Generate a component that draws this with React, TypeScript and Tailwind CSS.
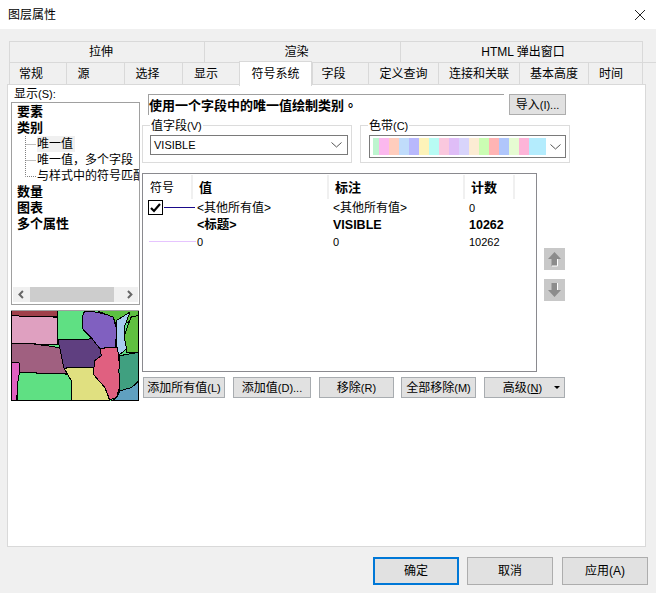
import React from "react";

const ui = "font-['Liberation_Sans','Noto_Sans_CJK_SC',sans-serif]";

const ramp = [
  "w-[6px] bg-[#bdf5cf]", "w-[10px] bg-[#fbb8ee]", "w-[10px] bg-[#ffcdbd]", "w-[10px] bg-[#c0dcfb]",
  "w-[10px] bg-[#b8b8fc]", "w-[10px] bg-[#fdf3b9]", "w-[10px] bg-[#b8fbf4]", "w-[10px] bg-[#fac8de]",
  "w-[10px] bg-[#dfbdf7]", "w-[10px] bg-[#d8d4fb]", "w-[10px] bg-[#fcecd3]", "w-[10px] bg-[#cbfdb3]",
  "w-[10px] bg-[#ffb4b4]", "w-[10px] bg-[#b0c6fb]", "w-[10px] bg-[#e6fbd2]", "w-[10px] bg-[#fdb4d8]",
  "w-[17px] bg-[#b4ecfd]",
];

const row1 = [
  ["拉伸", "w-[195px] pr-[12px]"],
  ["渲染", "w-[196px] pr-[12px]"],
  ["HTML 弹出窗口", "w-[243px] pl-[3px]"],
];
const row2 = [
  ["常规", "w-[57px] pr-[14px]"], ["源", "w-[58px] pr-[24px]"], ["选择", "w-[58px] pr-[12px]"], ["显示", "w-[57px] pr-[10px]"],
  ["符号系统", "w-[73px]"], ["字段", "w-[56px] pr-[14px]"], ["定义查询", "w-[70px]"], ["连接和关联", "w-[81px]"],
  ["基本高度", "w-[69px]"], ["时间", "w-[55px] pr-[9px]"],
];

function L({ children }: { children: React.ReactNode }) {
  return <span className="text-[11px]">{children}</span>;
}

function Chevron() {
  return (
    <svg width="11" height="6" viewBox="0 0 11 6" fill="none" stroke="#555" strokeWidth="1">
      <path d="M0.5 0.5 L5.5 5 L10.5 0.5" />
    </svg>
  );
}

function Connector({ last }: { last?: boolean }) {
  return (
    <svg width="12" height="16" viewBox="0 0 12 16" className="shrink-0">
      <path d={last ? "M0.5 0 V8.5 H11" : "M0.5 0 V16 M0.5 8.5 H11"} stroke="#808080" strokeWidth="1" strokeDasharray="1 1" fill="none" />
    </svg>
  );
}

function MapThumb() {
  const shapes: [string, string][] = [
    ["#a0404a", "35,420 173,420 173,438 105,438 35,436"],
    ["#dfa0c0", "35,436 105,438 173,440 175,500 173,523 140,523 85,518 35,518"],
    ["#5cc040", "290,420 417,420 417,440 350,470 340,440"],
    ["#5fe083", "173,420 255,420 247,440 250,475 277,505 175,508"],
    ["#8060c0", "255,423 290,425 320,432 340,440 350,475 347,530 300,533 280,530 277,503 250,477 247,440"],
    ["#60c040", "417,435 393,440 373,495 380,545 417,545"],
    ["#a8ccf0", "350,475 350,450 390,425 375,465 373,500 380,535 357,553 350,530"],
    ["#5f3f80", "175,508 277,505 300,533 305,555 285,570 283,590 193,592 180,530"],
    ["#a06080", "35,518 85,518 140,525 173,530 180,530 193,592 205,610 120,607 60,605 60,577 35,575"],
    ["#5fe083", "60,605 205,610 215,630 215,690 55,690 55,635"],
    ["#e060c0", "35,575 60,577 60,605 55,635 52,690 35,690"],
    ["#e0e080", "193,592 283,590 280,610 315,650 330,690 215,690 215,630"],
    ["#60a0c0", "417,630 417,690 335,690 350,680 360,660 395,650"],
    ["#e06080", "300,533 353,530 360,595 360,645 350,680 330,687 315,650 280,610 285,570 305,555"],
    ["#40a080", "360,555 415,545 417,630 395,650 360,660 357,600"],
  ];
  return (
    <svg width="128" height="90" viewBox="35 422 382 268" className="block" shapeRendering="crispEdges">
      <rect x="35" y="422" width="382" height="268" fill="#5fe083" />
      {shapes.map(([c, p], i) => (
        <polygon key={i} points={p} fill={c} stroke="#000" strokeWidth="3" strokeLinejoin="round" />
      ))}
    </svg>
  );
}

function Arrow({ down }: { down?: boolean }) {
  return (
    <div className="w-[21px] h-[22px] bg-[#c8c8c8] flex items-center justify-center">
      <svg width="15" height="16" viewBox="0 0 15 16" className={down ? "rotate-180" : ""}>
        <path d="M7.5 1 L14 8 H10.5 V15 H4.5 V8 H1 Z" fill="#8c8c8c" />
        <path d={down ? "M4.5 8 V15" : "M10.5 8 V15 H5"} stroke="#fff" strokeWidth="1" fill="none" />
      </svg>
    </div>
  );
}

function Btn({ w, children }: { w: string; children: React.ReactNode }) {
  return (
    <div className={`${w} h-[21px] bg-[#e1e1e1] border border-[#a8acb0] flex items-center justify-center text-[12px] text-black whitespace-nowrap`}>
      {children}
    </div>
  );
}

export default function App() {
  return (
    <div className={`${ui} w-[656px] h-[593px] flex flex-col bg-[#f0f0f0] text-[12px] text-black overflow-hidden leading-[16px]`}>
      {/* title bar */}
      <div className="h-[29px] bg-white flex items-center justify-between pl-[8px] pr-[11px] shrink-0">
        <span>图层属性</span>
        <svg width="10" height="10" viewBox="0 0 10 10" stroke="#222" strokeWidth="1">
          <path d="M0 0 L10 10 M10 0 L0 10" />
        </svg>
      </div>

      {/* tabs */}
      <div className="pt-[12px] pl-[9px] shrink-0">
        <div className="flex h-[21px]">
          {row1.map(([t, w]) => (
            <div key={t} className={`${w} border border-b-0 border-r-0 last:border-r border-[#d9d9d9] flex items-center justify-center`}>{t}</div>
          ))}
        </div>
        <div className="flex h-[22px] border-t border-[#d9d9d9]">
          {row2.map(([t, w]) =>
            t === "符号系统" ? (
              <div key={t} className={`${w} h-[25px] -mt-[2px] bg-white border border-b-0 border-[#d9d9d9] flex items-center justify-center relative z-10`}>{t}</div>
            ) : (
              <div key={t} className={`${w} border-l last:border-r border-[#d9d9d9] flex items-center justify-center`}>{t}</div>
            )
          )}
        </div>
      </div>

      {/* panel */}
      <div className="ml-[7px] w-[639px] h-[463px] bg-white border border-[#d9d9d9] flex shrink-0">
        {/* left */}
        <div className="ml-[3px] w-[129px] flex flex-col shrink-0">
          <div className="h-[17px] pl-[3px] pt-[2px] leading-[15px]">显示<L>(S):</L></div>
          <div className="h-[203px] border border-[#a0a0a0] flex flex-col justify-between overflow-hidden">
            <div className="pl-[5px] pt-[1px] font-bold text-[13px] leading-[16px]">
              <div className="h-[16px]">要素</div>
              <div className="h-[16px]">类别</div>
              <div className="flex font-normal text-[12px] ml-[8px] h-[16px] whitespace-nowrap"><Connector /><span className="bg-[#f0f0f0] pr-[2px]">唯一值</span></div>
              <div className="flex font-normal text-[12px] ml-[8px] h-[16px] whitespace-nowrap"><Connector /><span>唯一值，多个字段</span></div>
              <div className="flex font-normal text-[12px] ml-[8px] h-[16px] whitespace-nowrap"><Connector last /><span>与样式中的符号匹配</span></div>
              <div className="h-[16px]">数量</div>
              <div className="h-[16px]">图表</div>
              <div className="h-[16px]">多个属性</div>
            </div>
            <div className="mx-[1px] mb-[2px] h-[15px] bg-[#f0f0f0] flex items-center justify-between text-[#666]">
              <svg width="17" height="15" viewBox="0 0 17 15" fill="none" stroke="#666" strokeWidth="2"><path d="M10 4 L6.5 7.5 L10 11" /></svg>
              <div className="w-[85px] h-[15px] bg-[#cdcdcd]" />
              <div className="w-[7px]" />
              <svg width="17" height="15" viewBox="0 0 17 15" fill="none" stroke="#666" strokeWidth="2"><path d="M7 4 L10.5 7.5 L7 11" /></svg>
            </div>
          </div>
          <div className="mt-[5px] border-t border-[#a0a0a0] w-[128px]"><MapThumb /></div>
        </div>

        {/* right */}
        <div className="ml-[2px] pt-[9px] flex flex-col">
          <div className="flex">
            <div className="ml-[6px] w-[356px] h-[21px] border-t border-l border-[#a0a0a0] font-bold text-[13px] leading-[20px] whitespace-nowrap">使用一个字段中的唯一值绘制类别<span className="font-['Noto_Sans_CJK_TC',sans-serif]">。</span></div>
            <div className="ml-[5px] w-[57px] h-[21px] bg-[#e1e1e1] border border-[#adadad] flex items-center justify-center">导入<L>(I)...</L></div>
          </div>

          <div className="flex gap-[8px] mt-[10px]">
            <div className="relative w-[210px] h-[38px] border border-[#dcdcdc] pl-[7px] pt-[9px]">
              <span className="absolute left-[7px] -top-[8px] bg-white px-[1px]">值字段<L>(V)</L></span>
              <div className="w-[198px] h-[20px] border border-[#7a7a7a] flex items-center justify-between pl-[3px] pr-[5px]">
                <L>VISIBLE</L>
                <Chevron />
              </div>
            </div>
            <div className="relative w-[210px] h-[38px] border border-[#dcdcdc] pl-[8px] pt-[9px]">
              <span className="absolute left-[7px] -top-[8px] bg-white px-[1px]">色带<L>(C)</L></span>
              <div className="w-[197px] h-[23px] border border-[#7a7a7a] flex items-center justify-between pl-[3px] pr-[4px]">
                <div className="flex h-[17px]">
                  {ramp.map((c, i) => <div key={i} className={c} />)}
                </div>
                <Chevron />
              </div>
            </div>
          </div>

          <div className="flex mt-[10px]">
            <div className="w-[395px] h-[199px] border border-[#8a8a8f]">
              <div className="flex h-[25px] font-bold text-[13px] items-stretch">
                <div className="w-[50px] border-r-2 border-[#f0f0f0] pl-[7px] pt-[5px] font-normal text-[12px] mt-[1px]">符号</div>
                <div className="w-[136px] border-r-2 border-[#f0f0f0] pl-[6px] pt-[5px] mt-[1px]">值</div>
                <div className="w-[136px] border-r-2 border-[#f0f0f0] pl-[6px] pt-[5px] mt-[1px]">标注</div>
                <div className="w-[50px] border-r-2 border-[#f0f0f0] pl-[6px] pt-[5px] mt-[1px]">计数</div>
              </div>
              <div className="flex h-[17px] items-center whitespace-nowrap">
                <div className="w-[54px] flex items-center pl-[5px] shrink-0">
                  <div className="w-[15px] h-[15px] border border-black flex items-center justify-center shrink-0">
                    <svg width="11" height="10" viewBox="0 0 11 10" fill="none" stroke="#000" strokeWidth="2.2"><path d="M1 5 L4 8 L10 1" /></svg>
                  </div>
                  <div className="ml-[1px] w-[31px] h-px bg-[#1a0a8a]" />
                </div>
                <div className="w-[136px] shrink-0">&lt;其他所有值&gt;</div>
                <div className="w-[136px] shrink-0">&lt;其他所有值&gt;</div>
                <L>0</L>
              </div>
              <div className="flex h-[17px] items-center whitespace-nowrap font-bold text-[12.5px]">
                <div className="w-[54px] shrink-0" />
                <div className="w-[136px] shrink-0">&lt;标题&gt;</div>
                <div className="w-[136px] shrink-0">VISIBLE</div>
                <div>10262</div>
              </div>
              <div className="flex h-[17px] items-center whitespace-nowrap">
                <div className="w-[54px] pl-[6px] pr-[1px] shrink-0"><div className="h-px bg-[#e6c4ff]" /></div>
                <div className="w-[136px] shrink-0"><L>0</L></div>
                <div className="w-[136px] shrink-0"><L>0</L></div>
                <L>10262</L>
              </div>
            </div>
            <div className="ml-[7px] pt-[75px] flex flex-col gap-[9px]">
              <Arrow />
              <Arrow down />
            </div>
          </div>

          <div className="flex ml-[1px] mt-[5px] gap-[8px]">
            <Btn w="w-[82px]"><span>添加所有值<L>(L)</L></span></Btn>
            <Btn w="w-[78px]"><span>添加值<L>(D)...</L></span></Btn>
            <Btn w="w-[75px]"><span>移除<L>(R)</L></span></Btn>
            <div className="-ml-px"><Btn w="w-[75px]"><span>全部移除<L>(M)</L></span></Btn></div>
            <div className="relative">
              <Btn w="w-[81px] pr-[4px]"><span>高级<L>(<span className="underline">N</span>)</L></span></Btn>
              <span className="absolute right-[5px] top-[9px] w-0 h-0 border-x-[3px] border-x-transparent border-t-[3px] border-t-black" />
            </div>
          </div>
        </div>
      </div>

      {/* footer */}
      <div className="flex pl-[373px] pt-[10px] shrink-0">
        <div className="w-[86px] h-[28px] bg-[#e1e1e1] border-2 border-[#0078d7] flex items-center justify-center">确定</div>
        <div className="ml-[8px] w-[86px] h-[28px] bg-[#e1e1e1] border border-[#adadad] flex items-center justify-center">取消</div>
        <div className="ml-[9px] w-[86px] h-[28px] bg-[#e1e1e1] border border-[#adadad] flex items-center justify-center">应用(A)</div>
      </div>
    </div>
  );
}
